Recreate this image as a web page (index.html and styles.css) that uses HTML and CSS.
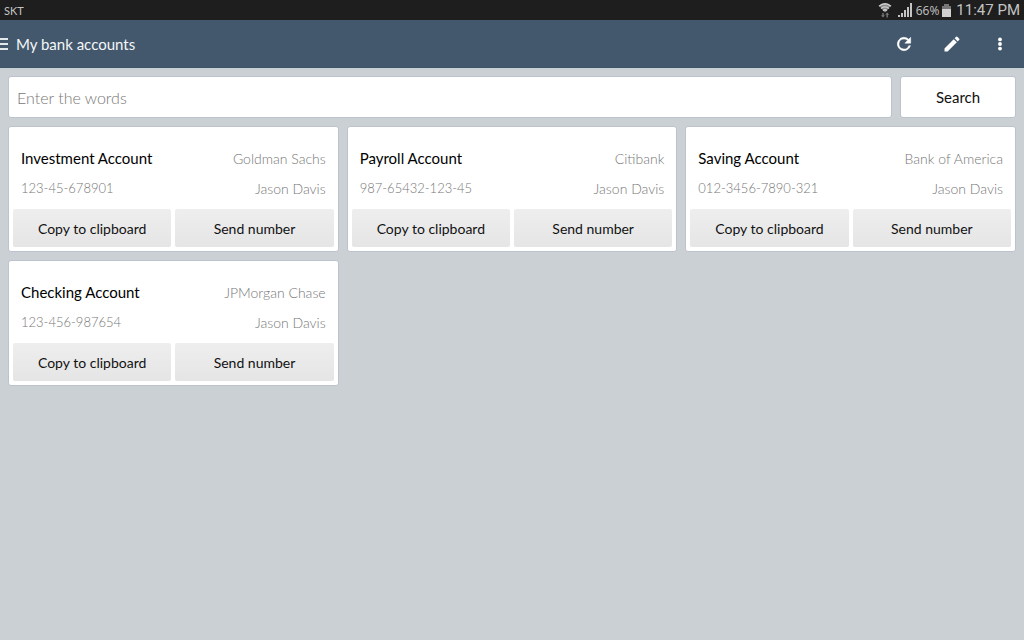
FILE: index.html
```html
<!DOCTYPE html>
<html lang="en">

<head>
    <meta charset="utf-8">
    <title>My bank accounts</title>
    <link rel="stylesheet" href="styles.css">
</head>

<body>
    <div class="statusbar">
        <span class="carrier">SKT</span>
        <svg class="wifi" width="14" height="16" viewBox="0 0 14 16">
            <path d="M1 3.500Q7-1 13 3.500L7 10.500z" fill="#8c8c8c" />
            <g fill="none" stroke="#d0d0d0" stroke-width="1.400">
                <path d="M1 4.200Q7-.8 13 4.200" />
                <path d="M3 6.500Q7 3.200 11 6.500" />
                <path d="M5 8.600Q7 7 9 8.600" />
            </g>
            <path d="M5 15.500l-2-2.300h1.300V11h1.400v2.200H7zM9.200 10.500l2 2.300H9.900v2.700H8.500v-2.700H7.200z" fill="#777" />
        </svg>
        <svg class="signal" width="14" height="14" viewBox="0 0 14 14">
            <path d="M0 12h2v2H0zM3 10h2v4H3zM6 7h2v7H6zM9 4h2v10H9zM12 0h2v14h-2z" fill="#c4c4c4" />
        </svg>
        <span class="percent">66%</span>
        <svg class="battery" width="9" height="13" viewBox="0 0 9 13">
            <path d="M2 0h5v2h2v11H0V2h2z" fill="#777" />
            <path d="M0 5h9v8H0z" fill="#d0d0d0" />
        </svg>
        <span class="clock">11:47 PM</span>
    </div>

    <header class="toolbar">
        <button class="menu" aria-label="Menu">
            <svg width="8" height="12" viewBox="0 0 8 12">
                <path d="M0 0h8v2H0zM0 5h8v2H0zM0 10h8v2H0z" fill="#e2e7ec" />
            </svg>
        </button>
        <h1>My bank accounts</h1>
        <button class="action" aria-label="Refresh">
            <svg width="20" height="20" viewBox="0 0 24 24">
                <path d="M17.650 6.350A8 8 0 1 0 19.730 14h-2.080A6 6 0 1 1 12 6c1.660 0 3.140.690 4.220 1.780L13 11h7V4z" stroke="white" stroke-width=".6" />
            </svg>
        </button>
        <button class="action" aria-label="Edit">
            <svg width="20" height="20" viewBox="0 0 24 24">
                <path d="M3 17.250V21h3.750L17.810 9.940l-3.750-3.750zM20.710 7.040a1 1 0 0 0 0-1.410l-2.340-2.340a1 1 0 0 0-1.410 0l-1.830 1.830 3.750 3.750z" />
            </svg>
        </button>
        <button class="action" aria-label="More options">
            <svg width="20" height="20" viewBox="0 0 24 24">
                <circle cx="12" cy="6.500" r="2.300" />
                <circle cx="12" cy="12" r="2.300" />
                <circle cx="12" cy="17.500" r="2.300" />
            </svg>
        </button>
    </header>

    <main>
        <form class="search">
            <input type="text" placeholder="Enter the words" aria-label="Search words">
            <button type="button">Search</button>
        </form>

        <div class="accounts">
            <article class="card">
                <div class="row">
                    <h2>Investment Account</h2>
                    <span>Goldman Sachs</span>
                </div>
                <div class="row">
                    <span class="number">123-45-678901</span>
                    <span>Jason Davis</span>
                </div>
                <div class="buttons">
                    <button>Copy to clipboard</button>
                    <button>Send number</button>
                </div>
            </article>
            <article class="card">
                <div class="row">
                    <h2>Payroll Account</h2>
                    <span>Citibank</span>
                </div>
                <div class="row">
                    <span class="number">987-65432-123-45</span>
                    <span>Jason Davis</span>
                </div>
                <div class="buttons">
                    <button>Copy to clipboard</button>
                    <button>Send number</button>
                </div>
            </article>
            <article class="card">
                <div class="row">
                    <h2>Saving Account</h2>
                    <span>Bank of America</span>
                </div>
                <div class="row">
                    <span class="number">012-3456-7890-321</span>
                    <span>Jason Davis</span>
                </div>
                <div class="buttons">
                    <button>Copy to clipboard</button>
                    <button>Send number</button>
                </div>
            </article>
            <article class="card">
                <div class="row">
                    <h2>Checking Account</h2>
                    <span>JPMorgan Chase</span>
                </div>
                <div class="row">
                    <span class="number">123-456-987654</span>
                    <span>Jason Davis</span>
                </div>
                <div class="buttons">
                    <button>Copy to clipboard</button>
                    <button>Send number</button>
                </div>
            </article>
        </div>
    </main>
</body>

</html>
```
FILE: styles.css
```css
* {
    box-sizing: border-box;
    margin: 0;
    padding: 0;
}

body {
    min-height: 100vh;
    background-color: #cad0d3;
    font-family: Lato, "Open Sans", sans-serif;
    font-size: 14px;
    color: #111;
}

button,
input {
    font: inherit;
    color: inherit;
    border: none;
}

.statusbar {
    display: flex;
    align-items: center;
    height: 20px;
    padding: 0 4px;
    background-color: #1e1e1e;
    color: #c4c4c4;
}

.carrier {
    margin-right: auto;
    font-size: 11px;
}

.signal {
    margin: 0 4px 0 6px;
}

.percent {
    font-family: "Open Sans", sans-serif;
    font-size: 12px;
}

.battery {
    margin: 0 5px 0 3px;
}

.clock {
    font-family: Roboto, sans-serif;
    font-size: 15px;
}

.toolbar {
    display: flex;
    align-items: center;
    height: 48px;
    background-color: #43586d;
    border-bottom: 1px solid #3d5569;
    color: #f4f6f8;
}

.toolbar button {
    display: flex;
    align-items: center;
    justify-content: center;
    height: 100%;
    background: none;
}

.toolbar h1 {
    margin: 0 auto 0 8px;
    font-size: 15px;
    font-weight: normal;
}

.action {
    width: 48px;
    fill: white;
}

main {
    padding: 8px;
}

.search {
    display: flex;
    gap: 8px;
    margin-bottom: 8px;
}

.search input,
.search button,
.card {
    background-color: white;
    border: 1px solid #bcc3ce;
    border-radius: 3px;
}

.search input {
    flex: 1;
    height: 42px;
    padding: 0 8px;
    font-size: 16px;
    font-weight: 300;
}

.search input::placeholder {
    color: #777;
}

.search button {
    width: 116px;
    font-size: 15px;
}

.accounts {
    display: grid;
    grid-template-columns: repeat(3, 1fr);
    gap: 8px;
}

.card {
    padding: 16px 4px 4px;
}

.row {
    display: flex;
    align-items: center;
    justify-content: space-between;
    height: 30px;
    padding: 0 8px;
    font-weight: 300;
    color: #777;
}

.row h2 {
    font-size: 15px;
    font-weight: normal;
    color: black;
}

.number {
    font-size: 13px;
}

.buttons {
    display: grid;
    grid-template-columns: 1fr 1fr;
    gap: 4px;
    margin-top: 6px;
}

.buttons button {
    height: 38px;
    border-radius: 2px;
    background: linear-gradient(#eee, #e5e5e5);
}
```
